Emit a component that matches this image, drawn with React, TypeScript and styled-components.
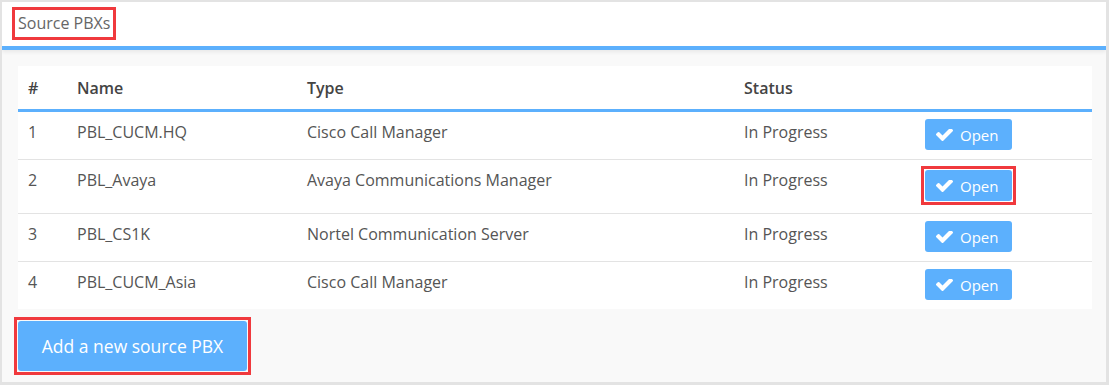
import styled, { createGlobalStyle } from 'styled-components';

const GlobalStyle = createGlobalStyle`
  html, body {
    margin: 0;
    padding: 0;
    background: #f9f9f9;
  }
  body {
    font-family: "Open Sans", "Liberation Sans", sans-serif;
  }
`;

const rows = [
  { id: 1, name: 'PBL_CUCM.HQ', type: 'Cisco Call Manager', status: 'In Progress' },
  { id: 2, name: 'PBL_Avaya', type: 'Avaya Communications Manager', status: 'In Progress', marked: true },
  { id: 3, name: 'PBL_CS1K', type: 'Nortel Communication Server', status: 'In Progress' },
  { id: 4, name: 'PBL_CUCM_Asia', type: 'Cisco Call Manager', status: 'In Progress' },
];

// thick check mark, font-awesome 4 style
const CheckIcon = () => (
  <svg viewBox="121 430 1550 1092" fill="currentColor" aria-hidden="true">
    <path d="M1671 566q0 40-28 68l-724 724-136 136q-28 28-68 28t-68-28l-136-136-362-362q-28-28-28-68t28-68l136-136q28-28 68-28t68 28l294 295 656-657q28-28 68-28t68 28l136 136q28 28 28 68z" />
  </svg>
);

const OpenAction = () => (
  <OpenButton>
    <CheckIcon />
    Open
  </OpenButton>
);

const App = () => (
  <Frame>
    <GlobalStyle />
    <Header>
      <Title>Source PBXs</Title>
    </Header>
    <Body>
      <Card>
        <HeadRow>
          <HeadCell>#</HeadCell>
          <HeadCell>Name</HeadCell>
          <HeadCell>Type</HeadCell>
          <HeadCell>Status</HeadCell>
          <HeadCell />
        </HeadRow>
        {rows.map((r) => (
          <Row key={r.id}>
            <Cell>{r.id}</Cell>
            <Cell>{r.name}</Cell>
            <Cell>{r.type}</Cell>
            <Cell>{r.status}</Cell>
            <ActionCell>
              {r.marked ? (
                <Highlight>
                  <OpenAction />
                </Highlight>
              ) : (
                <OpenAction />
              )}
            </ActionCell>
          </Row>
        ))}
      </Card>
      <AddHighlight>
        <AddButton>Add a new source PBX</AddButton>
      </AddHighlight>
    </Body>
  </Frame>
);

const blue = '#5cb0fd';
const red = '#f0393d';

const Frame = styled.div`
  box-sizing: border-box;
  width: 1109px;
  height: 385px;
  border-style: solid;
  border-color: #e3e3e3;
  border-width: 2px 3px 3px 2px;
  background: #f9f9f9;
  display: flex;
  flex-direction: column;
  overflow: hidden;
`;

const Header = styled.header`
  background: #fff;
  height: 44px;
  border-bottom: 4px solid ${blue};
  box-shadow: 0 2px 4px rgba(0, 0, 0, 0.07);
  display: flex;
  align-items: center;
  padding-left: 10px;
`;

const Title = styled.span`
  border: 3px solid ${red};
  padding: 3px 3px;
  font-size: 16px;
  line-height: 21px;
  color: #666;
  margin-top: -2px;
`;

const Body = styled.main`
  padding: 16px 14px 0 16px;
  display: flex;
  flex-direction: column;
  align-items: flex-start;
`;

const Card = styled.div`
  align-self: stretch;
  background: #fff;
  display: flex;
  flex-direction: column;
`;

const Columns = styled.div`
  display: grid;
  grid-template-columns: 49px 230px 437px 181px 1fr;
`;

const HeadRow = styled(Columns)`
  height: 43px;
  align-items: center;
  border-bottom: 3px solid ${blue};
`;

const HeadCell = styled.div`
  padding: 0 10px;
  font-size: 16px;
  font-weight: 600;
  color: #444;
`;

const Row = styled(Columns)`
  border-bottom: 1px solid #e3e3e3;
  &:last-child {
    border-bottom: none;
  }
`;

const Cell = styled.div`
  padding: 10px 10px 0;
  font-size: 16px;
  line-height: 20px;
  color: #555;
`;

const ActionCell = styled.div`
  padding: 7px 10px 9px;
  display: flex;
  align-items: flex-start;
`;

const Highlight = styled.span`
  display: inline-flex;
  border: 3px solid ${red};
  padding: 1px;
  margin: -1px -4px;
`;

const AddHighlight = styled(Highlight)`
  margin: 8px 0 0 -4px;
`;

const OpenButton = styled.button`
  display: inline-flex;
  align-items: center;
  gap: 7px;
  height: 31px;
  width: 87px;
  padding: 0 0 0 11px;
  border: none;
  border-radius: 3px;
  background: ${blue};
  color: #fff;
  font-family: "Open Sans", "Liberation Sans", sans-serif;
  font-size: 15px;
  cursor: pointer;

  svg {
    width: 17px;
    height: 12px;
  }
`;

const AddButton = styled.button`
  width: 229px;
  height: 50px;
  padding: 0;
  border: none;
  border-radius: 3px;
  background: ${blue};
  color: #fff;
  font-family: "Open Sans", "Liberation Sans", sans-serif;
  font-size: 17.5px;
  cursor: pointer;
`;

export default App;
